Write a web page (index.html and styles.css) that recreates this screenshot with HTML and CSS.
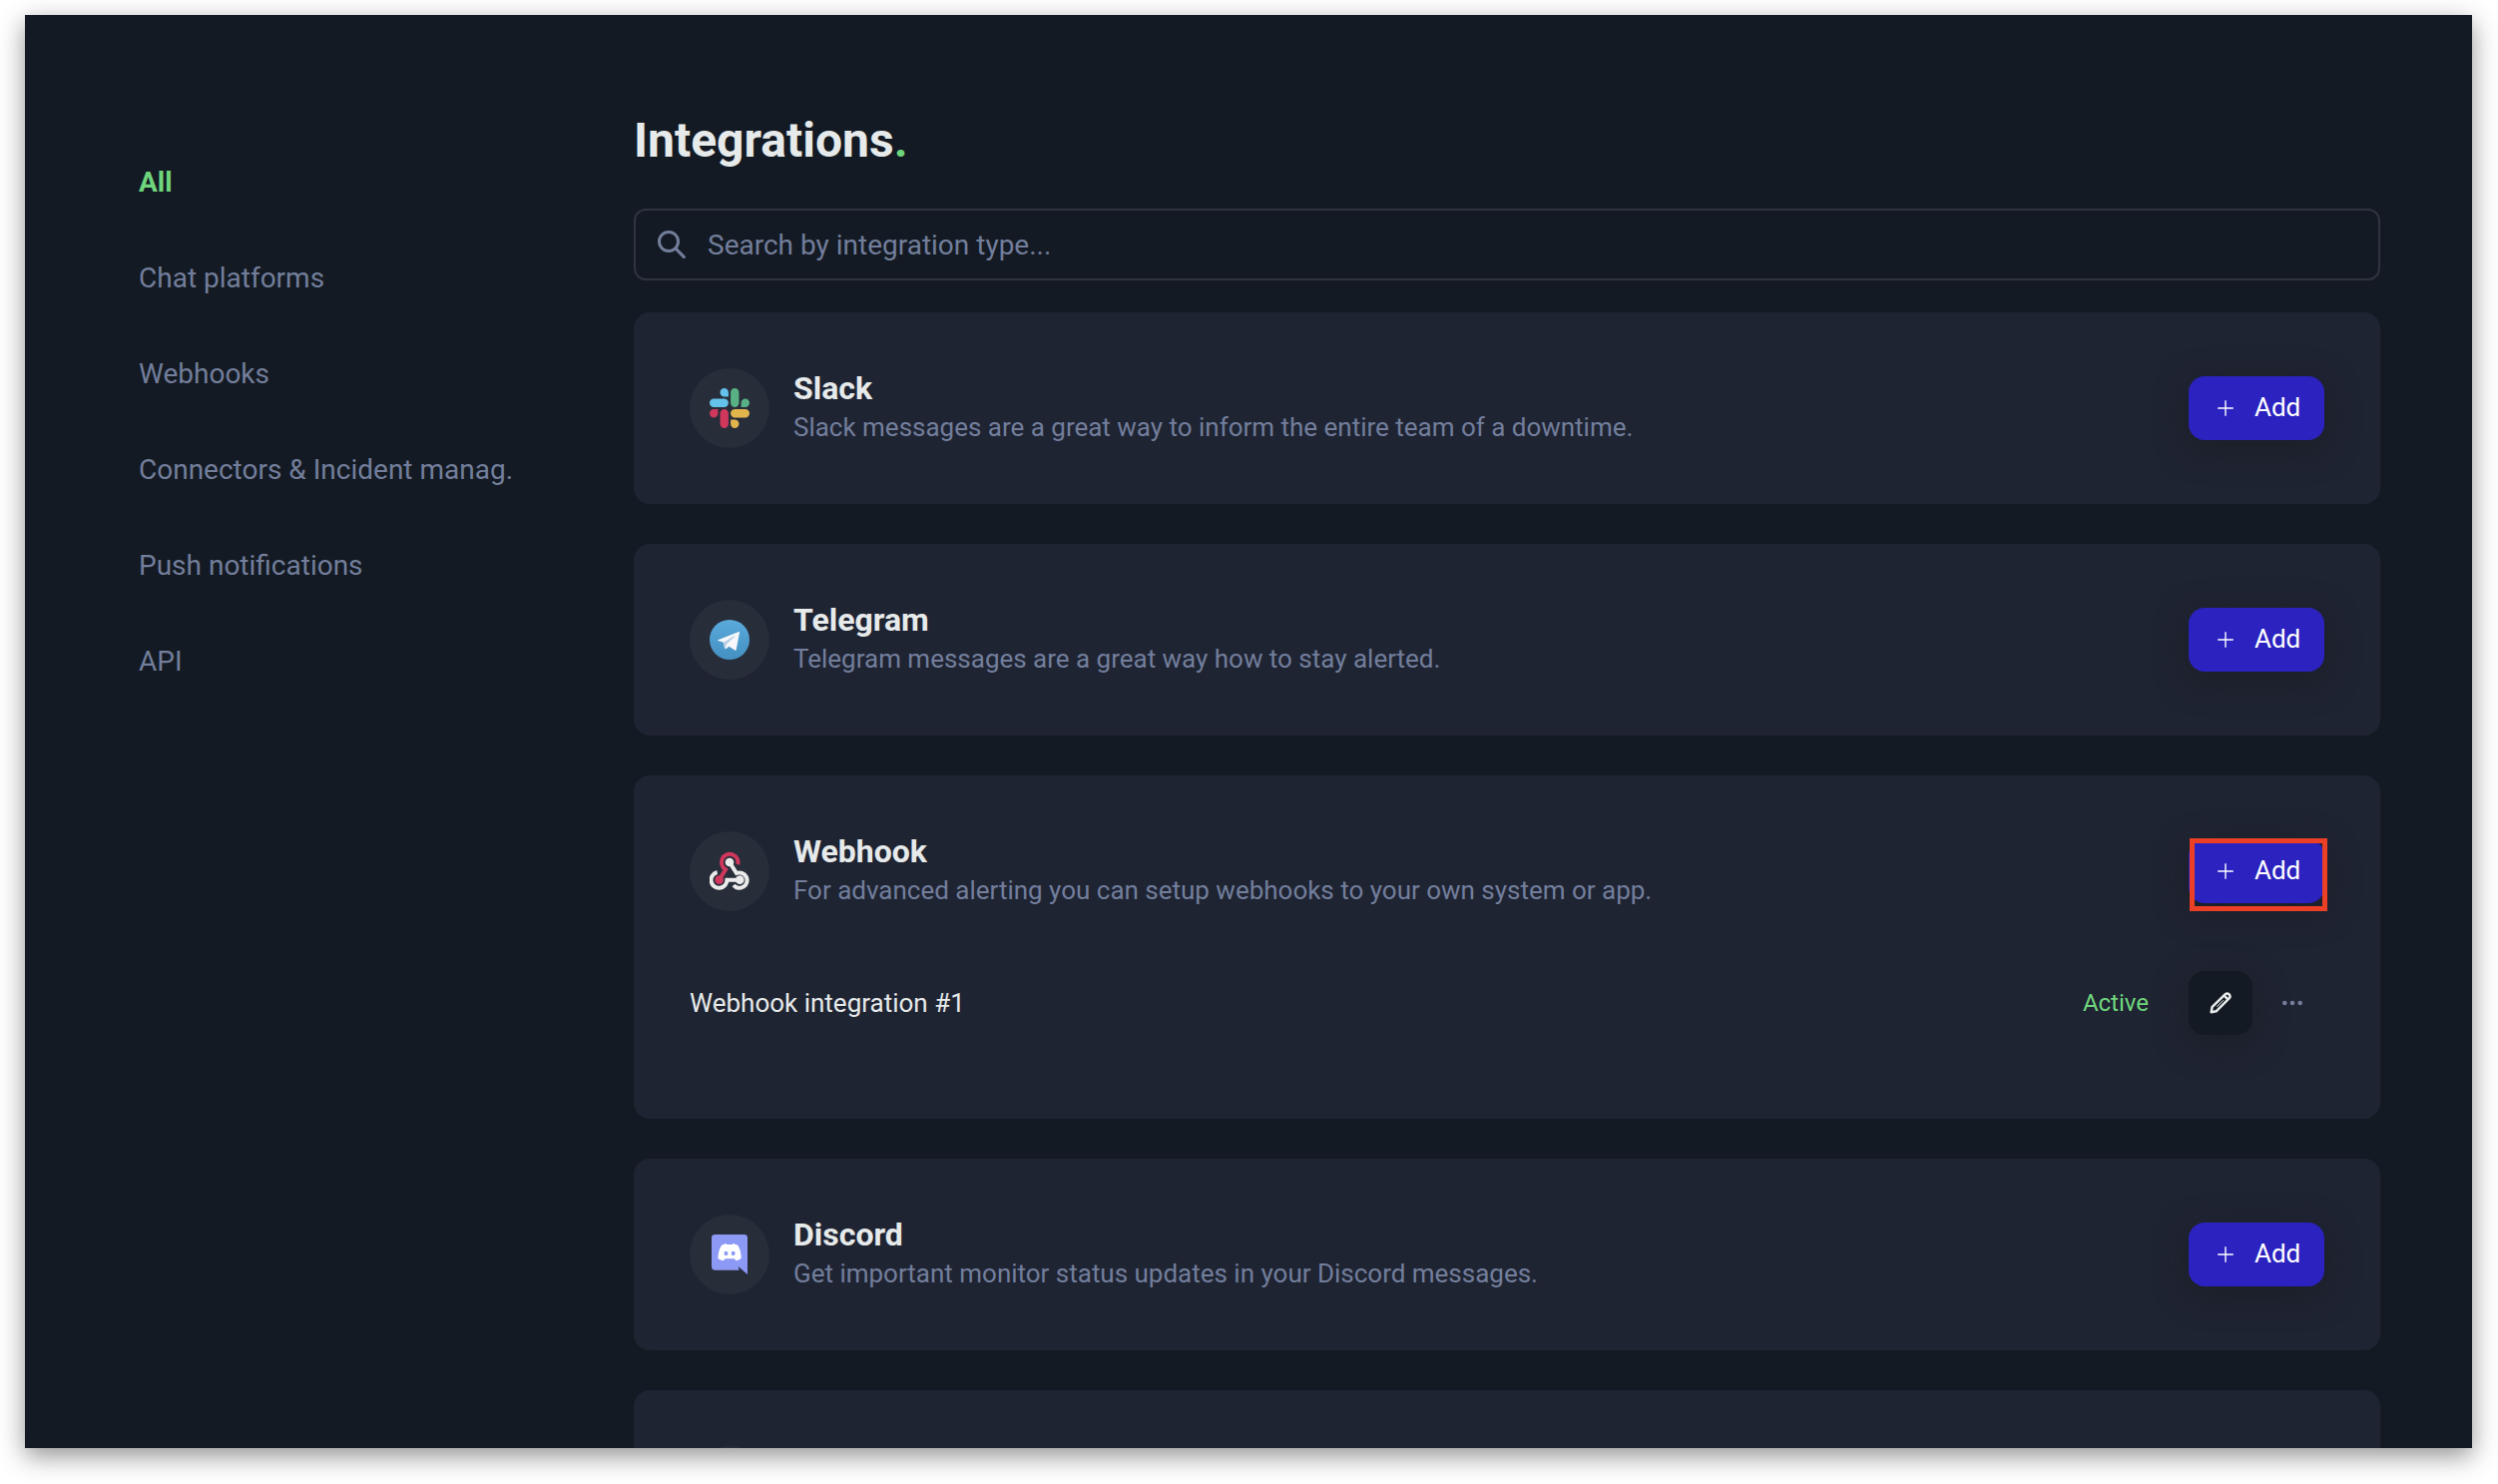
FILE: index.html
```html
<!DOCTYPE html>
<html lang="en">
<head>
<meta charset="utf-8">
<title>Integrations</title>
<link rel="stylesheet" href="styles.css">
</head>
<body>
<div class="window">
  <nav class="sidebar">
    <a class="nav-link active">All</a>
    <a class="nav-link">Chat platforms</a>
    <a class="nav-link">Webhooks</a>
    <a class="nav-link">Connectors &amp; Incident manag.</a>
    <a class="nav-link">Push notifications</a>
    <a class="nav-link">API</a>
  </nav>
  <main class="content">
    <h1 class="page-title">Integrations<span class="dot">.</span></h1>
    <div class="search">
      <svg class="search-icon" viewBox="0 0 28 28" fill="none" stroke="currentColor" stroke-linecap="round"><circle cx="11" cy="11" r="9.500" stroke-width="3"/><path d="M18 18 26.300 26.500" stroke-width="3.200"/></svg>
      <span class="placeholder">Search by integration type...</span>
    </div>

    <section class="card">
      <div class="card-head">
        <div class="avatar">
          <svg class="logo" viewBox="0 0 24 24">
            <path fill="#cf375c" d="M5.042 15.165a2.528 2.528 0 0 1-2.52 2.523A2.528 2.528 0 0 1 0 15.165a2.527 2.527 0 0 1 2.522-2.52h2.52v2.52zM6.313 15.165a2.527 2.527 0 0 1 2.521-2.52 2.527 2.527 0 0 1 2.521 2.52v6.313A2.528 2.528 0 0 1 8.834 24a2.528 2.528 0 0 1-2.521-2.522v-6.313z"/>
            <path fill="#63c1ea" d="M8.834 5.042a2.528 2.528 0 0 1-2.521-2.52A2.528 2.528 0 0 1 8.834 0a2.528 2.528 0 0 1 2.521 2.522v2.52H8.834zM8.834 6.313a2.528 2.528 0 0 1 2.521 2.521 2.528 2.528 0 0 1-2.521 2.521H2.522A2.528 2.528 0 0 1 0 8.834a2.528 2.528 0 0 1 2.522-2.521h6.312z"/>
            <path fill="#58b184" d="M18.956 8.834a2.528 2.528 0 0 1 2.522-2.521A2.528 2.528 0 0 1 24 8.834a2.528 2.528 0 0 1-2.522 2.521h-2.522V8.834zM17.688 8.834a2.528 2.528 0 0 1-2.523 2.521 2.527 2.527 0 0 1-2.52-2.521V2.522A2.527 2.527 0 0 1 15.165 0a2.528 2.528 0 0 1 2.523 2.522v6.312z"/>
            <path fill="#e2b44c" d="M15.165 18.956a2.528 2.528 0 0 1 2.523 2.522A2.528 2.528 0 0 1 15.165 24a2.527 2.527 0 0 1-2.52-2.522v-2.522h2.52zM15.165 17.688a2.527 2.527 0 0 1-2.52-2.523 2.526 2.526 0 0 1 2.52-2.52h6.313A2.527 2.527 0 0 1 24 15.165a2.528 2.528 0 0 1-2.522 2.523h-6.313z"/>
          </svg>
        </div>
        <div class="info">
          <h2 class="name">Slack</h2>
          <p class="desc">Slack messages are a great way to inform the entire team of a downtime.</p>
        </div>
        <button class="add"><svg class="plus" viewBox="0 0 16 16"><path d="M8 0.2V15.8M0.2 8H15.8"/></svg><span class="add-label">Add</span></button>
      </div>
    </section>

    <section class="card">
      <div class="card-head">
        <div class="avatar">
          <svg class="logo" viewBox="93 93 120 120">
            <defs><linearGradient id="sky" x1="0" y1="0" x2="0" y2="1"><stop offset="0" stop-color="#5aaadb"/><stop offset="1" stop-color="#4390c1"/></linearGradient></defs>
            <circle cx="153" cy="153" r="60" fill="url(#sky)"/>
            <path fill="#b9cfe2" d="M134 160 137 179 143 180 152 172 166 145Z"/>
            <path fill="#f5f7fa" d="M118 154 181 129Q184 128 183 132L173 184Q172 187 168 184L151 173 143 180Q140 182 141 176L143 168 170 141 135 161 119 156Q116 155 118 154Z"/>
          </svg>
        </div>
        <div class="info">
          <h2 class="name">Telegram</h2>
          <p class="desc">Telegram messages are a great way how to stay alerted.</p>
        </div>
        <button class="add"><svg class="plus" viewBox="0 0 16 16"><path d="M8 0.2V15.8M0.2 8H15.8"/></svg><span class="add-label">Add</span></button>
      </div>
    </section>

    <section class="card">
      <div class="card-head">
        <div class="avatar">
          <svg class="logo" viewBox="93 99 120 120" fill="none" stroke-width="12">
            <path stroke="#cf375c" d="M178 139A25 25 0 1 0 141 154L122 185"/>
            <circle cx="122" cy="185" r="13" fill="#cf375c"/>
            <path stroke="#ebebeb" d="M153 132 174 165A23 23 0 1 1 165 201"/>
            <circle cx="153" cy="132" r="13" fill="#ebebeb"/>
            <path stroke="#ebebeb" d="M116 162A24 24 0 1 0 145.500 185H184"/>
            <circle cx="184" cy="185" r="13" fill="#ebebeb"/>
          </svg>
        </div>
        <div class="info">
          <h2 class="name">Webhook</h2>
          <p class="desc">For advanced alerting you can setup webhooks to your own system or app.</p>
        </div>
        <div class="add-wrap">
          <button class="add"><svg class="plus" viewBox="0 0 16 16"><path d="M8 0.2V15.8M0.2 8H15.8"/></svg><span class="add-label">Add</span></button>
          <span class="highlight"></span>
        </div>
      </div>
      <div class="entry">
        <span class="entry-name">Webhook integration #1</span>
        <span class="status">Active</span>
        <button class="edit">
          <svg class="pencil" viewBox="0 0 22 22" fill="none" stroke="currentColor" stroke-width="2.500" stroke-linejoin="round" stroke-linecap="round"><path d="M1.700 20.300 2.500 15.200 15.800 2.200Q17.700 .6 19.600 2.400 21.300 4.400 19.800 6.200L6.600 19.300Z"/><path d="M14.800 3.800 18.200 7.200"/><path d="M7.500 14.500 13.500 8.500" stroke-width="1"/></svg>
        </button>
        <svg class="more" viewBox="0 0 20 6" fill="currentColor"><circle cx="2.300" cy="3" r="2.300"/><circle cx="10" cy="3" r="2.300"/><circle cx="17.700" cy="3" r="2.300"/></svg>
      </div>
    </section>

    <section class="card">
      <div class="card-head">
        <div class="avatar">
          <svg class="logo" viewBox="93 96 120 120">
            <path fill="#8c99f5" d="M110 96H197Q207 96 207 106V216L179 192 182 203H110Q99 203 99 192V106Q99 96 110 96Z"/>
            <path fill="#fff" d="M129 128 142 123 145 126H161L164 123 178 128Q188 145 188 168 181 174 172 175L168 169H139L135 175Q125 174 118 168 119 144 129 128Z"/>
            <ellipse cx="142.500" cy="153" rx="6" ry="6.500" fill="#8c99f5"/>
            <ellipse cx="164" cy="153" rx="6" ry="6.500" fill="#8c99f5"/>
            <path fill="#8c99f5" d="M139 171Q153 174 168 171V176H139Z"/>
          </svg>
        </div>
        <div class="info">
          <h2 class="name">Discord</h2>
          <p class="desc">Get important monitor status updates in your Discord messages.</p>
        </div>
        <button class="add"><svg class="plus" viewBox="0 0 16 16"><path d="M8 0.2V15.8M0.2 8H15.8"/></svg><span class="add-label">Add</span></button>
      </div>
    </section>

    <section class="card">
      <div class="card-head"><div class="avatar"></div></div>
    </section>
  </main>
</div>
</body>
</html>
```
FILE: styles.css
```css
* { box-sizing: border-box; }

body {
  margin: 0;
  height: 1487px;
  padding: 15px 26px 36px 25px;
  overflow: hidden;
  background: #fff;
  font-family: Roboto, "Liberation Sans", sans-serif;
  color: #e6eaea;
}

.window {
  display: flex;
  height: 1436px;
  overflow: hidden;
  background: #141a23;
  box-shadow: 0 8px 24px rgba(0, 0, 0, .43);
}

.sidebar {
  display: flex;
  flex-direction: column;
  flex: none;
  width: 610px;
  padding: 120px 0 0 114px;
}

.nav-link {
  font-size: 28px;
  line-height: 96px;
  white-space: nowrap;
  color: #727e9b;
}

.nav-link.active { font-weight: 700; color: #6fd57c; }

.content {
  display: flex;
  flex-direction: column;
  width: 1750px;
}

.page-title {
  margin: 98px 0 40px;
  font-size: 48px;
  line-height: 56px;
  font-weight: 700;
}

.page-title .dot { color: #6fd57c; }

.search {
  display: flex;
  flex: none;
  align-items: center;
  height: 72px;
  margin-bottom: 32px;
  padding: 0 22px;
  border: 2px solid #2f3340;
  border-radius: 12px;
  color: #727e9b;
}

.search-icon { width: 28px; height: 28px; margin-right: 22px; }

.placeholder { padding-top: 2px; font-size: 28px; line-height: 40px; }

.card {
  flex: none;
  margin-bottom: 40px;
  padding: 56px;
  border-radius: 16px;
  background: #1f2433;
}

.card-head { display: flex; align-items: center; height: 80px; }

.avatar {
  display: flex;
  flex: none;
  align-items: center;
  justify-content: center;
  width: 80px;
  height: 80px;
  margin-right: 24px;
  border-radius: 50%;
  background: #282d3a;
}

.logo { width: 40px; height: 40px; }

.info { flex: 1; }

.name { margin: 0; font-size: 32px; line-height: 38px; font-weight: 700; }

.desc { margin: 0; font-size: 26px; line-height: 40px; letter-spacing: -.01px; color: #727e9b; }

.add {
  display: flex;
  align-items: center;
  width: 136px;
  height: 64px;
  padding: 0 0 0 29px;
  border: 0;
  border-radius: 16px;
  background: #2b22c0;
  box-shadow: 0 8px 32px rgba(25, 28, 31, .7);
  font-family: inherit;
  font-size: 26px;
  line-height: 40px;
  color: #fff;
}

.add-label { padding-bottom: 2px; }

.plus {
  width: 16px;
  height: 16px;
  margin-right: 21px;
  stroke: #fff;
  stroke-width: 1.400;
}

.add-wrap { position: relative; }

.highlight {
  position: absolute;
  left: 1px;
  top: -1px;
  width: 138px;
  height: 73px;
  border: 5px solid #eb4025;
}

.entry {
  display: flex;
  align-items: center;
  height: 64px;
  margin: 60px 0 28px;
}

.entry-name { flex: 1; font-size: 26px; }

.status { margin-right: 40px; font-size: 24px; color: #6fd57c; }

.edit {
  display: flex;
  align-items: center;
  justify-content: center;
  width: 64px;
  height: 64px;
  margin-right: 30px;
  padding: 0;
  border: 0;
  border-radius: 16px;
  background: #141a23;
  box-shadow: 0 8px 32px rgba(25, 28, 31, .7);
  color: #e6eaea;
}

.pencil { width: 22px; height: 22px; }

.more { width: 20px; height: 6px; margin-right: 22px; color: #727e9b; }
```
